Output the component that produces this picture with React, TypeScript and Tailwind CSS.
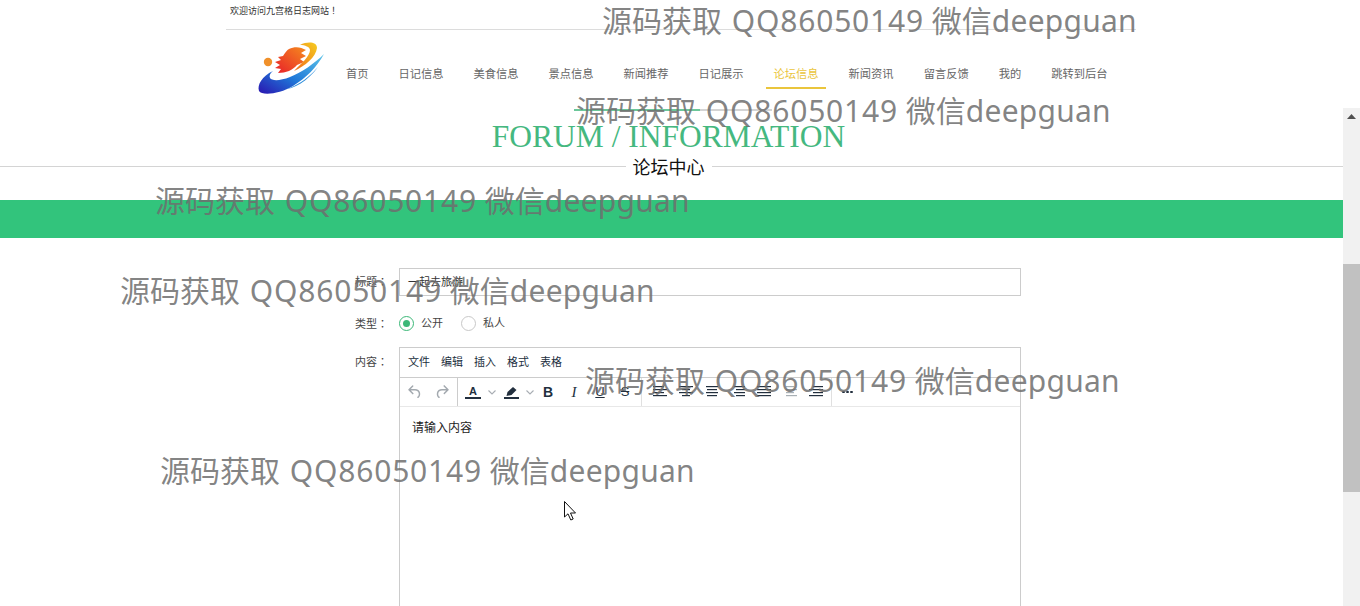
import React from 'react';

const navItems = ['首页', '日记信息', '美食信息', '景点信息', '新闻推荐', '日记展示', '论坛信息', '新闻资讯', '留言反馈', '我的', '跳转到后台'];
const menuItems = ['文件', '编辑', '插入', '格式', '表格'];
const font = "font-['Noto_Sans','Noto_Sans_CJK_SC',sans-serif]";

const marks = [
  'top-[1px] left-[602px]',
  'top-[91px] left-[576px]',
  'top-[181px] left-[155px]',
  'top-[271px] left-[120px]',
  'top-[361px] left-[585px]',
  'top-[451px] left-[160px]',
];

const Logo = () => (
  <svg width="85" height="65" viewBox="0 0 85 65" className="shrink-0">
    <defs>
      <linearGradient id="blue" x1="0" y1="1" x2="1" y2="0">
        <stop offset="0" stopColor="#2a14b0" />
        <stop offset="0.45" stopColor="#1f78d8" />
        <stop offset="1" stopColor="#5cc4e8" />
      </linearGradient>
      <linearGradient id="fire" x1="0" y1="1" x2="1" y2="0">
        <stop offset="0" stopColor="#e8202a" />
        <stop offset="1" stopColor="#f58a1e" />
      </linearGradient>
      <linearGradient id="gold" x1="0" y1="1" x2="1" y2="0">
        <stop offset="0" stopColor="#f06a1a" />
        <stop offset="1" stopColor="#f5cc20" />
      </linearGradient>
    </defs>
    <circle cx="18" cy="27" r="4.2" fill="#f0902a" />
    <path d="M23 36C12 41 7 50 9 56C12 61 30 59 43 51C56 43 67 32 74 19C64 29 52 37 40 42C30 46 22 46 20 43C19 41 20 38 23 36Z" fill="url(#blue)" />
    <path d="M68 32C62 39 54 46 44 51C38 54 34 55 32 55C44 54 58 46 68 32Z" fill="#2f8fdc" />
    <path d="M39 14C45 11 51 12 56 15L51 18L56 21L50 24L54 27L47 30C43 35 36 38 28 38L31 34L25 33L30 30L25 27L31 25L28 22L33 21C35 18 37 15 39 14Z" fill="url(#fire)" />
    <path d="M50 10C58 6 67 7 67 13C66 22 55 31 44 36C51 29 60 21 60 15C60 12 55 10 50 10Z" fill="url(#gold)" />
  </svg>
);

// toolbar alignment-style icon, x and width of each line
const Lines = ({ rows, light }: { rows: [number, number][]; light?: boolean }) => (
  <svg width="14" height="14" viewBox="0 0 14 14" className="shrink-0">
    {rows.map(([x, w], i) => (
      <rect key={i} x={x} y={1 + i * 3} width={w} height="1.2" fill={light ? '#a8b0b5' : '#222f3e'} />
    ))}
  </svg>
);

const Chevron = () => (
  <svg width="10" height="10" viewBox="0 0 10 10" className="shrink-0">
    <path d="M1.5 3.5L5 7L8.5 3.5" fill="none" stroke="#a8adb3" strokeWidth="1.1" />
  </svg>
);

const Radio = ({ on, label }: { on?: boolean; label: string }) => (
  <div className="flex items-center gap-[7px]">
    <span className={`flex h-[15px] w-[15px] items-center justify-center rounded-full border bg-white ${on ? 'border-[#3cb878]' : 'border-[#c8c8c8]'}`}>
      {on && <span className="h-[7px] w-[7px] rounded-full bg-[#3cb878]" />}
    </span>
    <span className="text-[11px] text-[#444]">{label}</span>
  </div>
);

// labels: the full-width colon sits centred in the reference
const Label = ({ text, className = '' }: { text: string; className?: string }) => (
  <label className={`w-[44px] text-[11px] text-[#444] ${className}`}>
    {text}
    <span className="font-['Noto_Sans_CJK_TC',sans-serif]">：</span>
  </label>
);

const Mark = () => (
  <>
    源码获取 <span className="ml-[2px] tracking-[0.8px]">QQ86050149</span> 微信<span className="tracking-[0.25px]">deepguan</span>
  </>
);

export default function App() {
  return (
    <div className={`relative h-[606px] w-[1360px] overflow-hidden bg-white ${font}`}>
      {/* header */}
      <div className="ml-[226px] w-[910px]">
        <div className="h-[30px] border-b border-[#dcdcdc] pl-1 pt-[3px] text-[9px] leading-[15px] text-[#333]">
          欢迎访问九宫格日志网站<span className="font-['Noto_Sans_CJK_TC',sans-serif]">！</span>
        </div>
        <div className="flex h-[79px] items-start">
          <div className="ml-[24px] mt-[5px]">
            <Logo />
          </div>
          <ul className="mt-[34px] -ml-[4px] flex">
            {navItems.map((n) => (
              <li
                key={n}
                className={`mx-[7.5px] h-[25px] whitespace-nowrap border-b-2 px-[7.5px] text-[11.25px] leading-[20px] first:ml-[7.5px] ${n === '论坛信息' ? 'border-[#eac53c] text-[#eac53c]' : 'border-transparent text-[#666]'}`}
              >
                {n}
              </li>
            ))}
          </ul>
        </div>
      </div>

      {/* page title */}
      <div className="h-[91px]">
        <div className="ml-[574px] flex h-[2px] w-[198px]">
          <div className="w-[126px] bg-[#6cc79a]" />
          <div className="flex-1 bg-[#d4d4d4]" />
        </div>
        <div className="mt-[7px] pr-[23px] text-center font-['Liberation_Serif',serif] text-[31.5px] leading-[38px] text-[#45b880]">FORUM / INFORMATION</div>
        <div className="relative -mt-px mr-[17px] flex h-[24px] items-center justify-center pr-[6px]">
          <div className="absolute inset-x-0 top-[11px] h-px bg-[#d4d4d4]" />
          <span className="relative bg-white px-[7px] text-[18px] leading-[24px] text-[#111]">论坛中心</span>
        </div>
      </div>

      {/* green band */}
      <div className="h-[38px] w-[1343px] bg-[#32c47c]" />

      {/* form */}
      <div className="ml-[355px] mt-[30px] w-[666px]">
        <div className="flex items-center">
          <Label text="标题" />
          <div className="flex h-[28px] flex-1 items-center border border-[#ccc] pl-[8px] text-[11px] text-[#333]">一起去旅游</div>
        </div>
        <div className="mt-[19px] flex h-[17px] items-center">
          <Label text="类型" />
          <div className="flex gap-[18px]">
            <Radio on label="公开" />
            <Radio label="私人" />
          </div>
        </div>
        <div className="mt-[15px] flex">
          <Label text="内容" className="mt-[6px] leading-[16px]" />
          <div className="h-[300px] flex-1 border border-[#ccc]">
            <div className="flex h-[30px] items-center gap-[11px] border-b border-[#ccc] pl-[8px] text-[11px] text-[#222f3e]">
              {menuItems.map((m) => (
                <span key={m}>{m}</span>
              ))}
            </div>
            <div className="flex h-[29px] items-center border-b border-[#e8e8e8] text-[#222f3e]">
              <div className="flex h-full w-[58px] items-center gap-[9px] border-r border-[#ccc] pl-[6px] text-[#a3a9af]">
                <svg width="18" height="18" viewBox="0 0 24 24" fill="currentColor"><path d="M6.4 8H12c3.7 0 6.2 2 6.8 5.1.6 2.7-.4 5.6-2.3 6.8a1 1 0 0 1-1-1.8c1.1-.6 1.8-2.7 1.4-4.6-.5-2.1-2.1-3.5-4.9-3.5H6.4l3.3 3.3a1 1 0 1 1-1.4 1.4l-5-5a1 1 0 0 1 0-1.4l5-5a1 1 0 0 1 1.4 1.4L6.4 8z" /></svg>
                <svg width="18" height="18" viewBox="0 0 24 24" fill="currentColor"><path d="M17.6 10H12c-2.8 0-4.4 1.4-4.9 3.5-.4 2 .3 4 1.4 4.6a1 1 0 1 1-1 1.8c-2-1.2-2.9-4.1-2.3-6.8.6-3 3-5.1 6.8-5.1h5.6l-3.3-3.3a1 1 0 1 1 1.4-1.4l5 5a1 1 0 0 1 0 1.4l-5 5a1 1 0 0 1-1.4-1.4l3.3-3.3z" /></svg>
              </div>
              <div className="flex h-full w-[184px] items-center border-r border-[#e0e0e0] pl-[7px]">
                <span className="w-[16px] border-b-2 border-[#222f3e] text-center font-['Liberation_Sans',sans-serif] text-[11px] font-bold leading-[12px]">A</span>
                <span className="ml-[6px]"><Chevron /></span>
                <span className="ml-[6px] flex w-[16px] flex-col items-center">
                  <svg width="14" height="11" viewBox="0 0 14 11"><path d="M2.5 10L3.5 6L9 1L12.5 4L7.5 9Z" fill="#222f3e" /></svg>
                  <span className="h-[2px] w-[15px] bg-[#222f3e]" />
                </span>
                <span className="ml-[6px]"><Chevron /></span>
                <span className="ml-[5px] w-[16px] text-center font-['Liberation_Sans',sans-serif] text-[14px] font-bold">B</span>
                <span className="ml-[10px] w-[16px] text-center font-['Liberation_Serif',serif] text-[15px] italic">I</span>
                <span className="ml-[10px] w-[16px] text-center font-['Liberation_Sans',sans-serif] text-[13px] underline">U</span>
                <span className="ml-[9px] w-[16px] text-center font-['Liberation_Sans',sans-serif] text-[13px] line-through">S</span>
              </div>
              <div className="flex h-full w-[190px] items-center gap-[12px] border-r border-[#e0e0e0] pl-[11px]">
                <Lines rows={[[0, 11], [0, 14], [0, 11], [0, 14]]} />
                <Lines rows={[[0, 14], [3, 8], [0, 14], [3, 8]]} />
                <Lines rows={[[1, 12], [2, 10], [1, 12], [2, 10]]} />
                <Lines rows={[[3, 11], [5, 9], [3, 11], [5, 9]]} />
                <Lines rows={[[0, 14], [0, 14], [0, 14], [0, 14]]} />
                <Lines light rows={[[3, 8], [3, 11], [3, 8], [3, 11]]} />
                <Lines rows={[[4, 10], [0, 14], [4, 10], [0, 14]]} />
              </div>
              <span className="ml-[10px] flex gap-[1.5px]">
                <i className="h-[2.5px] w-[2.5px] rounded-full bg-[#222f3e]" />
                <i className="h-[2.5px] w-[2.5px] rounded-full bg-[#222f3e]" />
                <i className="h-[2.5px] w-[2.5px] rounded-full bg-[#222f3e]" />
              </span>
            </div>
            <div className="pl-[12px] pt-[12px] text-[12px] leading-[18px] text-[#222]">请输入内容</div>
          </div>
        </div>
      </div>

      {/* scrollbar */}
      <div className="absolute bottom-0 right-0 top-[108px] w-[17px] bg-[#f1f1f1]">
        <svg width="9" height="5" viewBox="0 0 9 5" className="absolute left-[4px] top-[6px]"><path d="M4.5 0L9 5H0Z" fill="#505050" /></svg>
        <div className="absolute left-0 top-[156px] h-[228px] w-full bg-[#c1c1c1]" />
      </div>

      {/* mouse pointer */}
      <svg width="14" height="20" viewBox="0 0 14 20" className="absolute left-[564px] top-[501px]">
        <path d="M.5.5V16L4 12.8L6.8 19L9.2 18L6.5 12H11.5Z" fill="#fff" stroke="#111" strokeWidth="1" />
      </svg>

      {/* watermarks */}
      {marks.map((m) => (
        <div key={m} className={`pointer-events-none absolute whitespace-nowrap text-[30px] leading-[40px] text-[#6e6e6e]/85 ${m}`}>
          <Mark />
        </div>
      ))}
    </div>
  );
}
